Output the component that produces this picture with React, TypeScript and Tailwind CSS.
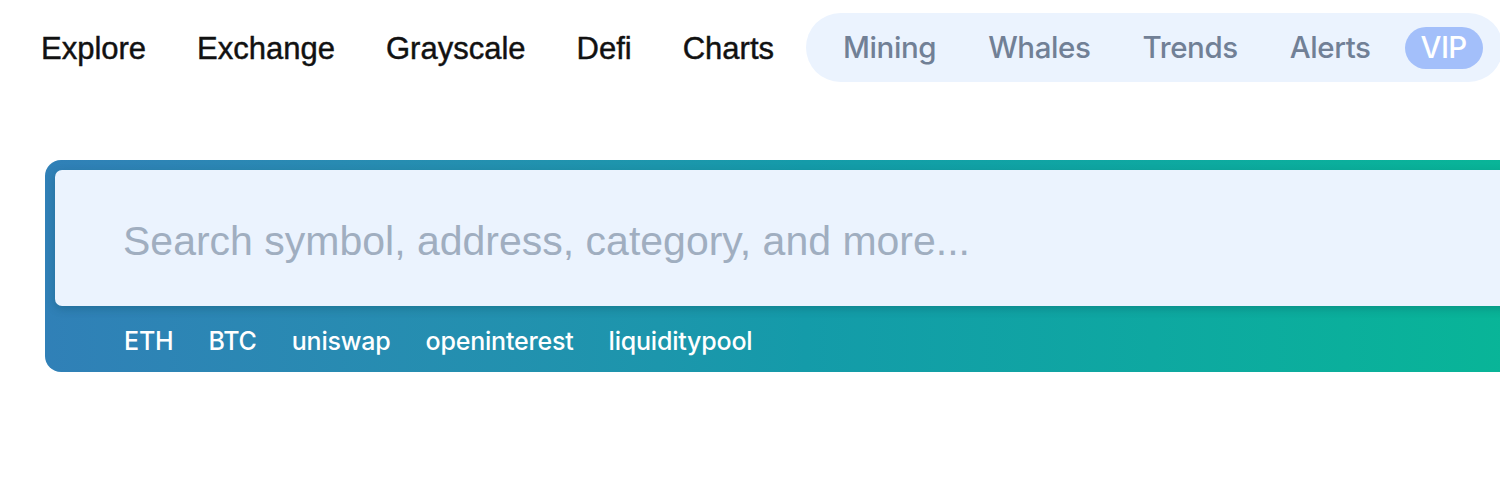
import React from "react";

const mainLinks = ["Explore", "Exchange", "Grayscale", "Defi", "Charts"];
const subLinks = ["Mining", "Whales", "Trends", "Alerts"];
const quickTags = ["ETH", "BTC", "uniswap", "openinterest", "liquiditypool"];

export default function App() {
  return (
    <div className="w-[1500px] h-[500px] overflow-hidden bg-white">
      {/* top navigation */}
      <nav className="flex items-center pt-[13px] pl-[41px]">
        <div className="flex items-center gap-[51px] pt-[2px]">
          {mainLinks.map((l) => (
            <a
              key={l}
              className="text-[31px] leading-none text-[#111] [font-family:'Liberation_Sans',Arial,sans-serif] [-webkit-text-stroke:0.45px_#111] whitespace-nowrap"
            >
              {l}
            </a>
          ))}
        </div>
        <div className="ml-[32px] flex items-center h-[69px] rounded-full bg-[#ebf3fe] pl-[19px] pr-[20px] gap-4 shrink-0">
          {subLinks.map((l) => (
            <a
              key={l}
              className="px-[18px] text-[29.5px] leading-none font-medium text-[#718096] [font-family:Inter,sans-serif] tracking-[-0.4px]"
            >
              {l}
            </a>
          ))}
          <a className="flex items-center h-[42px] px-[16px] rounded-full bg-[#a3bffa] text-white text-[29.5px] leading-none font-medium [font-family:Inter,sans-serif] tracking-[-0.6px]">
            VIP
          </a>
        </div>
      </nav>

      {/* search card */}
      <div className="mt-[78px] ml-[45px] w-[1520px] h-[212px] rounded-[16px] bg-linear-to-r from-[#3080b7] via-[#149ba9] to-[#08b796] pt-[10px] pl-[10px]">
        <div className="h-[136px] rounded-[7px] bg-[#ebf3fe] flex items-center pl-[68px] pt-[6px] shadow-[0_3px_8px_rgba(0,60,70,0.25)]">
          <span className="text-[41px] leading-none text-[#a0aec0] [font-family:'Liberation_Sans',Arial,sans-serif] whitespace-nowrap">
            Search symbol, address, category, and more...
          </span>
        </div>
        <div className="flex items-center h-[66px] pl-[69px] pt-[5px] gap-[35px]">
          {quickTags.map((t) => (
            <a
              key={t}
              className="text-white text-[25px] leading-none font-medium [font-family:Inter,sans-serif] tracking-[-0.2px]"
            >
              {t}
            </a>
          ))}
        </div>
      </div>
    </div>
  );
}
